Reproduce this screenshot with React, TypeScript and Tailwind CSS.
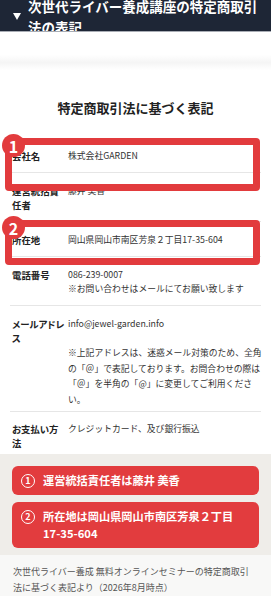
const rows = [
  { label: ["会社名"], value: ["株式会社GARDEN"] },
  { label: ["運営統括責", "任者"], value: ["藤井 美香"] },
  { label: ["所在地"], value: ["岡山県岡山市南区芳泉２丁目17-35-604"] },
  { label: ["電話番号"], value: ["086-239-0007", "※お問い合わせはメールにてお願い致します"] },
];

function Label({ lines }: { lines: string[] }) {
  return (
    <div className="w-[58px] shrink-0 pl-[2px] text-[9.4px] leading-[14px] font-bold text-[#222] whitespace-nowrap [font-feature-settings:'palt']">
      {lines.map((l) => (
        <div key={l}>{l}</div>
      ))}
    </div>
  );
}

function Marker({ n, className }: { n: number; className: string }) {
  return (
    <div className={`absolute left-[-5px] w-[255px] rounded-[4px] border-[7px] border-[#e23b3d] ${className}`}>
      <div className="absolute -left-[10px] -top-[11px] flex h-[23px] w-[23px] items-center justify-center rounded-full bg-[#e23b3d] text-[16px] font-bold leading-none text-white">
        {n}
      </div>
    </div>
  );
}

function Callout({ n, lines }: { n: number; lines: string[] }) {
  return (
    <div className="flex items-start gap-[8px] rounded-[6px] bg-[#e23c3e] px-[9px] py-[6px] text-white">
      <span className="mt-[1.5px] flex h-[14px] w-[14px] shrink-0 items-center justify-center rounded-full border-[1.5px] border-white text-[9px] font-bold leading-none">
        {n}
      </span>
      <div className="text-[11.2px] font-bold leading-[17px] whitespace-nowrap">
        {lines.map((l) => (
          <div key={l}>{l}</div>
        ))}
      </div>
    </div>
  );
}

export default function App() {
  return (
    <div className="h-[600px] w-[271px] overflow-hidden bg-white font-['Noto_Sans_CJK_JP',sans-serif]">
      {/* top bar */}
      <div className="flex h-[32px] overflow-hidden border-b border-[#a9adb5] bg-[#1e2636]">
        <svg className="ml-[13px] mt-[13px] shrink-0" width="8" height="7" viewBox="0 0 8 7">
          <polygon points="0,0 8,0 4,7" fill="#fff" />
        </svg>
        <div className="-mt-[4px] ml-[7px] text-[13.5px] font-bold leading-[21px] text-white whitespace-nowrap">
          <div>次世代ライバー養成講座の特定商取引</div>
          <div>法の表記</div>
        </div>
      </div>

      <div className="mt-[23px] h-[15px] bg-gradient-to-b from-white via-[#f5f5f5] to-white" />

      <h1 className="mt-[28px] text-center text-[13px] font-bold leading-[20px] text-[#222]">
        特定商取引法に基づく表記
      </h1>

      <div className="relative mx-[10px] mt-[20px]">
        {rows.map((r) => (
          <div key={r.label.join("")} className="flex border-b border-[#e6e6e6] pt-[11px] pb-[9px]">
            <Label lines={r.label} />
            <div className="text-[8.8px] leading-[14px] text-[#333] whitespace-nowrap">
              {r.value.map((v) => (
                <div key={v}>{v}</div>
              ))}
            </div>
          </div>
        ))}

        <div className="flex border-b border-[#e6e6e6] pt-[11px] pb-[4px]">
          <Label lines={["メールアドレ", "ス"]} />
          <div className="text-[8.8px] text-[#333] whitespace-nowrap">
            <div className="leading-[14px]">info@jewel-garden.info</div>
            <div className="h-[14px]" />
            <div className="leading-[15.5px]">
              <div>※上記アドレスは、迷惑メール対策のため、全角</div>
              <div>の「＠」で表記しております。お問合わせの際は</div>
              <div>「＠」を半角の「@」に変更してご利用くださ</div>
              <div>い。</div>
            </div>
          </div>
        </div>

        <div className="flex pt-[10px] pb-[4px]">
          <Label lines={["お支払い方", "法"]} />
          <div className="text-[8.8px] leading-[14px] text-[#333] whitespace-nowrap">
            クレジットカード、及び銀行振込
          </div>
        </div>

        <Marker n={1} className="top-0 h-[53px]" />
        <Marker n={2} className="top-[82px] h-[45px]" />
      </div>

      <div className="flex flex-col gap-[7px] bg-[#efede9] px-[12px] pt-[12px] pb-[7px]">
        <Callout n={1} lines={["運営統括責任者は藤井 美香"]} />
        <Callout n={2} lines={["所在地は岡山県岡山市南区芳泉２丁目", "17-35-604"]} />
      </div>

      <div className="bg-[#f8f8f7] px-[13px] pt-[9px] text-[9px] leading-[16px] text-[#555] whitespace-nowrap">
        <div>次世代ライバー養成 無料オンラインセミナーの特定商取引</div>
        <div>法に基づく表記より（2026年8月時点）</div>
      </div>
    </div>
  );
}
